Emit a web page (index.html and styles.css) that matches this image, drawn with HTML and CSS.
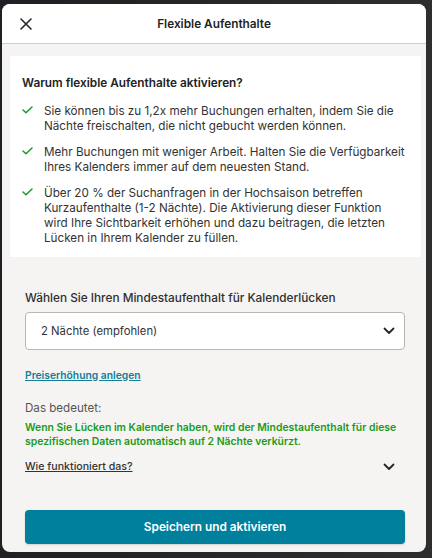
FILE: index.html
```html
<!DOCTYPE html>
<html lang="de">
<head>
<meta charset="utf-8">
<link rel="stylesheet" href="styles.css">
</head>
<body>
<div class="backdrop">
  <div class="modal">
    <div class="header">
      <svg class="close" width="12" height="12" viewBox="0 0 12 12"><path d="M1 1L11 11M11 1L1 11" stroke="#262626" stroke-width="1.6" stroke-linecap="round"/></svg>
      <div class="title">Flexible Aufenthalte</div>
    </div>
    <div class="body">
      <div class="card">
        <div class="card-title">Warum flexible Aufenthalte aktivieren?</div>
        <ul class="list">
          <li><svg class="check" width="11" height="8" viewBox="0 0 11 8"><path d="M1 4L4 6.8L10 1" fill="none" stroke="#1a9a2a" stroke-width="1.5" stroke-linecap="round" stroke-linejoin="round"/></svg><span>Sie können bis zu 1,2x mehr Buchungen erhalten, indem Sie die Nächte freischalten, die nicht gebucht werden können.</span></li>
          <li><svg class="check" width="11" height="8" viewBox="0 0 11 8"><path d="M1 4L4 6.8L10 1" fill="none" stroke="#1a9a2a" stroke-width="1.5" stroke-linecap="round" stroke-linejoin="round"/></svg><span>Mehr Buchungen mit weniger Arbeit. Halten Sie die Verfügbarkeit Ihres Kalenders immer auf dem neuesten Stand.</span></li>
          <li><svg class="check" width="11" height="8" viewBox="0 0 11 8"><path d="M1 4L4 6.8L10 1" fill="none" stroke="#1a9a2a" stroke-width="1.5" stroke-linecap="round" stroke-linejoin="round"/></svg><span>Über 20 % der Suchanfragen in der Hochsaison betreffen Kurzaufenthalte (1-2 Nächte). Die Aktivierung dieser Funktion wird Ihre Sichtbarkeit erhöhen und dazu beitragen, die letzten Lücken in Ihrem Kalender zu füllen.</span></li>
        </ul>
      </div>
      <div class="form">
        <div class="label">Wählen Sie Ihren Mindestaufenthalt für Kalenderlücken</div>
        <div class="select">
          <span>2 Nächte (empfohlen)</span>
          <svg width="12" height="8" viewBox="0 0 12 8"><path d="M1.5 1.5L6 6L10.5 1.5" fill="none" stroke="#262626" stroke-width="1.8" stroke-linecap="round" stroke-linejoin="round"/></svg>
        </div>
        <a class="link" href="#">Preiserhöhung anlegen</a>
        <div class="means">Das bedeutet:</div>
        <div class="green">Wenn Sie Lücken im Kalender haben, wird der Mindestaufenthalt für diese spezifischen Daten automatisch auf 2 Nächte verkürzt.</div>
        <div class="how">
          <span>Wie funktioniert das?</span>
          <svg width="12" height="8" viewBox="0 0 12 8"><path d="M1.5 1.5L6 6L10.5 1.5" fill="none" stroke="#262626" stroke-width="1.8" stroke-linecap="round" stroke-linejoin="round"/></svg>
        </div>
        <button class="btn">Speichern und aktivieren</button>
      </div>
    </div>
  </div>
</div>
</body>
</html>
```
FILE: styles.css
```css
* { box-sizing: border-box; }
html, body { margin: 0; padding: 0; }
body {
  width: 432px;
  height: 558px;
  overflow: hidden;
  background: #3a3a3a;
  font-family: Inter, "Noto Sans", sans-serif;
  color: #2b2b2b;
}
.backdrop {
  padding: 4px 6px 0 2px;
  background: linear-gradient(to right, #1f1f24 0, #2e2e2e 100%);
  height: 558px;
}
.modal {
  width: 424px;
  height: 548px;
  background: #f5f4f2;
  border-radius: 8px;
  overflow: hidden;
  display: flex;
  flex-direction: column;
}
.header {
  height: 40px;
  background: #fff;
  border-bottom: 1px solid #cfcfcf;
  display: flex;
  align-items: center;
  justify-content: center;
  position: relative;
  flex-shrink: 0;
}
.close {
  position: absolute;
  left: 18px;
  top: 14px;
}
.title {
  font-size: 11.8px;
  font-weight: 600;
  color: #1f1f1f;
}
.body {
  flex: 1;
  padding: 12px 5px 0 8px;
  display: flex;
  flex-direction: column;
}
.card {
  background: #fff;
  height: 201px;
  padding: 19px 15px 0 12px;
}
.card-title {
  font-size: 11.8px;
  font-weight: 600;
  line-height: 16px;
  color: #222;
}
.list {
  list-style: none;
  margin: 13px 0 0 0;
  padding: 0;
}
.list li {
  display: flex;
  align-items: flex-start;
  font-size: 11.7px;
  line-height: 15.2px;
  color: #333;
  margin-bottom: 10.5px;
}
.list li:last-child { margin-bottom: 0; }
.check {
  flex-shrink: 0;
  margin: 2px 11px 0 0;
}
.form {
  padding: 33px 16px 0 15px;
  display: flex;
  flex-direction: column;
}
.label {
  font-size: 11.8px;
  font-weight: 500;
  line-height: 16px;
  color: #2f2f2f;
}
.select {
  margin-top: 6px;
  height: 38px;
  background: #fff;
  border: 1px solid #b9b6b2;
  border-radius: 4px;
  display: flex;
  align-items: center;
  justify-content: space-between;
  padding: 0 9px 0 15px;
  font-size: 11.3px;
  color: #333;
}
.link {
  margin-top: 18px;
  font-size: 10.3px;
  font-weight: 600;
  line-height: 14px;
  color: #127f98;
  text-decoration: underline;
  align-self: flex-start;
}
.means {
  margin-top: 19px;
  font-size: 11.6px;
  line-height: 14px;
  color: #555;
}
.green {
  margin-top: 6px;
  font-size: 10.4px;
  font-weight: 600;
  line-height: 13.5px;
  color: #1b9a1b;
}
.how {
  margin-top: 12px;
  display: flex;
  align-items: center;
  justify-content: space-between;
  padding-right: 10px;
  font-size: 10.6px;
  font-weight: 500;
  line-height: 14px;
  color: #333;
}
.how span { text-decoration: underline; }
.btn {
  margin-top: 36px;
  height: 34px;
  border: none;
  border-radius: 4px;
  background: #00809d;
  color: #fff;
  font-family: Inter, "Noto Sans", sans-serif;
  font-size: 11.8px;
  font-weight: 600;
  box-shadow: 0 1px 2px rgba(0,0,0,0.15);
}
```
